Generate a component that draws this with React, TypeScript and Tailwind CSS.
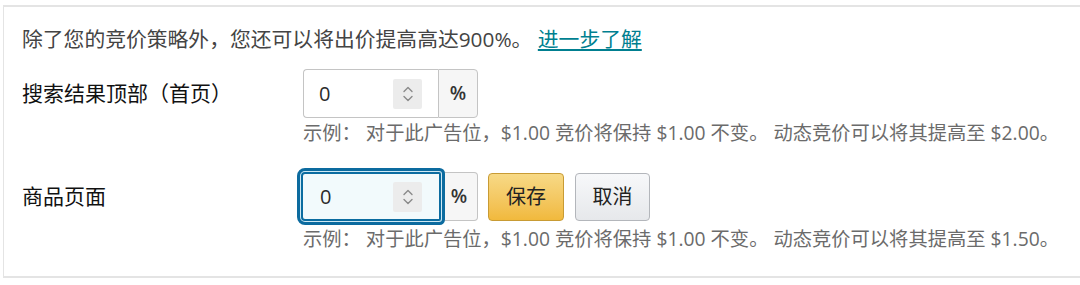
import React from "react"

function Stepper() {
  return (
    <span className="flex h-[30px] w-[29px] flex-col items-center justify-center rounded-[2px] bg-[#ececec]">
      <svg width="12" height="20" viewBox="0 0 12 20" fill="none" stroke="#8a8a8a" strokeWidth="1.4" strokeLinecap="round" strokeLinejoin="round">
        <path d="M2 7.5 L6 3.5 L10 7.5" />
        <path d="M2 12.5 L6 16.5 L10 12.5" />
      </svg>
    </span>
  )
}

function PercentInput({ focused }: { focused?: boolean }) {
  return (
    <div className="flex h-[49px]">
      <div
        className={
          focused
            ? "relative z-10 -ml-[2px] flex w-[140px] items-center justify-between rounded-l-[4px] rounded-r-[2px] border-2 border-[#0b6ca0] bg-[#f2fafc] pl-[17px] pr-[17px] shadow-[0_0_0_1px_#cfe9f4,0_0_0_4px_#0c6b9f]"
            : "flex w-[135px] items-center justify-between rounded-l-[4px] border border-r-0 border-[#c4c4c4] bg-white pl-[15px] pr-[16px]"
        }
      >
        <span className="text-[20px] text-[#2b2b2b]">0</span>
        <Stepper />
      </div>
      <div
        className={
          focused
            ? "flex w-[37px] items-center justify-center rounded-r-[4px] border border-l-0 border-[#c4c4c4] bg-[#f6f6f6] text-[19px] font-semibold text-[#333]"
            : "flex w-[40px] items-center justify-center rounded-r-[4px] border border-[#c4c4c4] bg-[#f6f6f6] text-[19px] font-semibold text-[#333]"
        }
      >
        %
      </div>
    </div>
  )
}

export default function App() {
  return (
    <div className="h-[285px] w-[1080px] overflow-hidden bg-white pt-[5px] font-['Open_Sans','Noto_Sans_CJK_SC',sans-serif]">
      <div className="ml-[3px] h-[273px] border-y-2 border-l border-[#e4e4e4] pl-[18px] pt-[18px]">
        <p className="h-[28px] text-[20.8px] leading-[28px] text-[#444]">
          除了您的竞价策略外，您还可以将出价提高高达900%。{" "}
          <a href="#" className="text-[#007f90] underline underline-offset-2">
            进一步了解
          </a>
        </p>

        <div className="mt-[16px] flex items-center">
          <span className="w-[281px] text-[21px] text-[#111]">搜索结果顶部（首页）</span>
          <PercentInput />
        </div>
        <p className="ml-[281px] mt-[3px] text-[19.3px] leading-[24px] text-[#6b6b6b]">
          示例： 对于此广告位，$1.00 竞价将保持 $1.00 不变。 动态竞价可以将其提高至 $2.00。
        </p>

        <div className="mt-[27px] flex items-center">
          <span className="w-[281px] text-[21px] text-[#111]">商品页面</span>
          <PercentInput focused />
          <button className="ml-[10px] h-[48px] w-[76px] rounded-[4px] border border-[#c89b34] bg-gradient-to-b from-[#f7d985] to-[#f1b93c] text-[20px] text-[#222]">
            保存
          </button>
          <button className="ml-[11px] h-[48px] w-[75px] rounded-[4px] border border-[#b3b6bb] bg-gradient-to-b from-[#f7f8fa] to-[#e6e8eb] text-[20px] text-[#222]">
            取消
          </button>
        </div>
        <p className="ml-[281px] mt-[6px] text-[19.3px] leading-[24px] text-[#6b6b6b]">
          示例： 对于此广告位，$1.00 竞价将保持 $1.00 不变。 动态竞价可以将其提高至 $1.50。
        </p>
      </div>
    </div>
  )
}
